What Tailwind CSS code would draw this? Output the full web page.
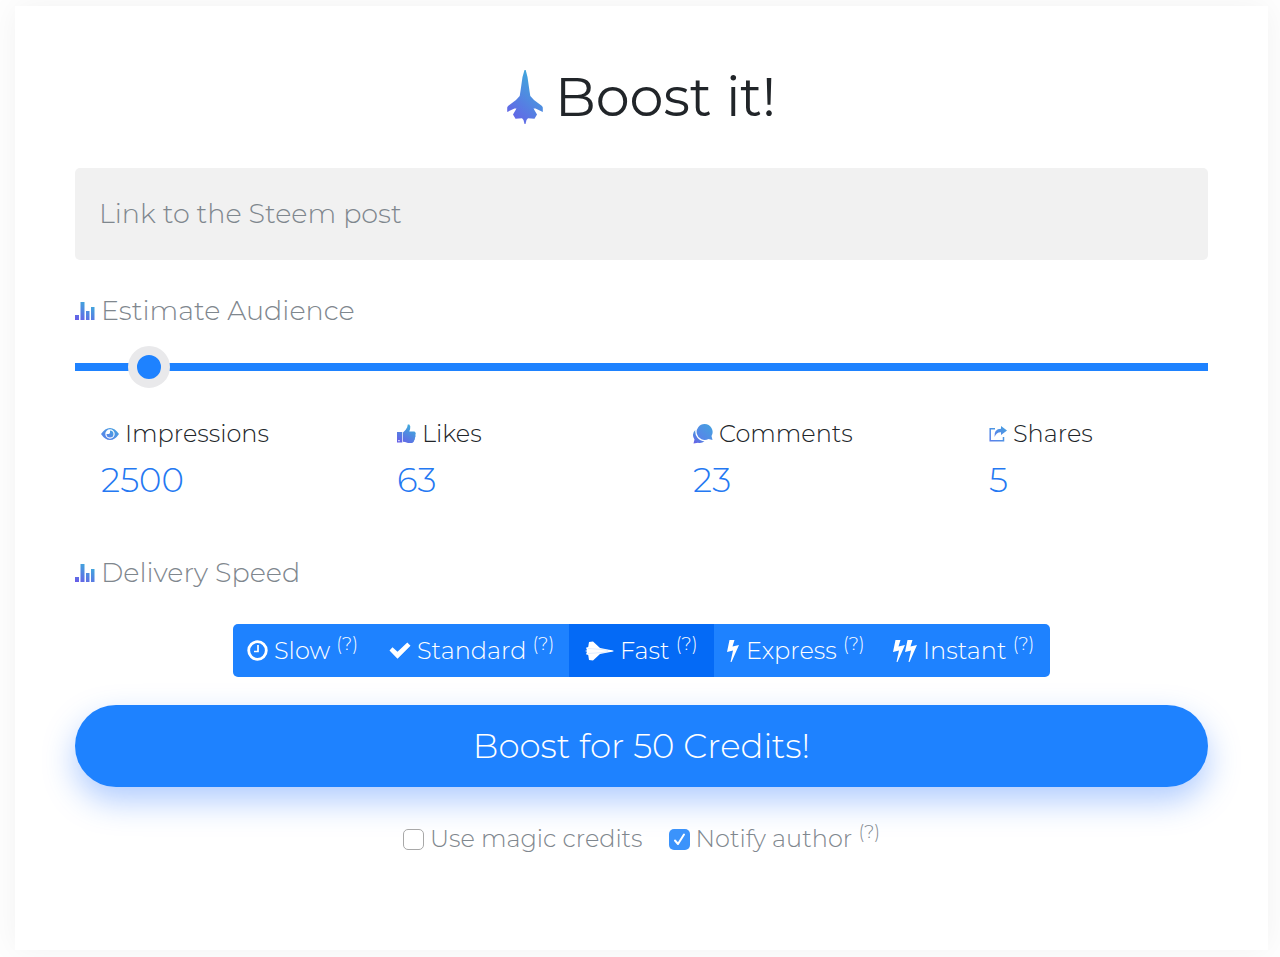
<!DOCTYPE html>
<html lang="en">
<head>
<meta charset="utf-8">
<meta name="viewport" content="width=device-width, initial-scale=1">
<title>Boost it!</title>
<script src="https://cdn.jsdelivr.net/npm/@tailwindcss/browser@4"></script>
</head>
<body class="min-h-screen bg-[#fefefe] pt-1.5 pr-3 pb-1.5 pl-[15px] font-['Montserrat','Inter',sans-serif] font-light text-[#212529]">
<svg class="absolute h-0 w-0" aria-hidden="true">
  <defs>
    <linearGradient id="g" x1="0" y1="1" x2="0.6" y2="0"><stop offset="0" stop-color="#6a5ae8"/><stop offset="1" stop-color="#3fa9dc"/></linearGradient>
    <linearGradient id="g2" x1="0" y1="1" x2="1" y2="0"><stop offset="0" stop-color="#5c7fea"/><stop offset="1" stop-color="#43a3df"/></linearGradient>
    <symbol id="bars" viewBox="0 0 20 18"><path fill="url(#g)" d="M0 13h4v5H0zM5.500 0h4v18h-4zM11 9h3.500v9H11zM16 5h3.500v13H16z"/></symbol>
  </defs>
</svg>
<main class="min-h-[944px] bg-white px-15 pt-[55px] pb-20 shadow-[0_0_30px_rgba(0,0,0,0.05)]">
  <form>
    <h1 class="flex h-[72px] items-center justify-center gap-3 text-[54px] leading-[72px] font-normal whitespace-nowrap">
      <svg class="h-[54px] w-9 shrink-0" viewBox="0 0 36 54" aria-hidden="true"><path fill="url(#g)" d="M17.500 0h1.200L20.500 7l2 14 .8 5 3.700 4 8 6 .8 1.500v4.500L28.500 38.500 26.500 38.500 30 44.500 27.500 48.800 21 48.200 19.500 50 18.500 54h-1L16.500 50 15 48.200 8.500 48.800 6 44.500 9.500 38.500 7.500 38.500.2 42V37.500L1 36 9 30l3.700-4 .8-5 2-14z"/></svg>
      <span>Boost it!</span>
    </h1>
    <input type="text" aria-label="Link to the Steem post" placeholder="Link to the Steem post" class="mt-[35px] block h-[92px] w-full rounded-[5px] bg-[#f1f1f1] px-6 pb-0.5 text-[27px] font-light text-gray-700 outline-none placeholder:text-[#7f878e]">

    <label for="audience" class="mt-[33px] flex h-9 items-center gap-1.5 text-[27px] leading-9 text-[#7f878e]">
      <svg class="h-[18px] w-5 shrink-0" aria-hidden="true"><use href="#bars"/></svg>Estimate Audience
    </label>
    <input id="audience" type="range" min="0" max="51500" step="100" value="2500" class="mt-[17px] block h-[42px] w-full cursor-pointer appearance-none bg-transparent outline-none [&::-webkit-slider-runnable-track]:h-2 [&::-webkit-slider-runnable-track]:bg-[#1e82ff] [&::-webkit-slider-thumb]:-mt-[17px] [&::-webkit-slider-thumb]:size-[42px] [&::-webkit-slider-thumb]:appearance-none [&::-webkit-slider-thumb]:rounded-full [&::-webkit-slider-thumb]:border-[9px] [&::-webkit-slider-thumb]:border-[#e9e9eb] [&::-webkit-slider-thumb]:bg-[#1e82ff]">

    <dl class="mt-7 grid grid-cols-4 gap-x-[77px] pl-[26px] whitespace-nowrap">
      <div>
        <dt class="flex h-9 items-center gap-1.5 text-2xl leading-9"><svg class="h-5 w-[18px] shrink-0" viewBox="0 0 18 20" aria-hidden="true"><path fill="url(#g2)" fill-rule="evenodd" d="M0 10Q4 4 9 4t9 6q-4 6-9 6T0 10zm4.300 0a4.700 4.700 0 0 0 9.400 0 4.700 4.700 0 0 0-9.400 0z"/><path fill="url(#g2)" fill-rule="evenodd" d="M9 6.500a3.500 3.500 0 1 1-3.500 3.500H7.800A1.300 1.300 0 0 0 9 8.800z"/></svg>Impressions</dt>
        <dd class="mt-[7px] text-[34px] leading-[42px] text-[#2478f2]">2500</dd>
      </div>
      <div>
        <dt class="flex h-9 items-center gap-1.5 text-2xl leading-9"><svg class="h-5 w-[19px] shrink-0" viewBox="0 0 19 20" aria-hidden="true"><path fill="url(#g)" fill-rule="evenodd" d="M0 8h5.300v10.500H0zm1.300 8v1.300h1.300V16zM6 8.500l2.700-2.800 1.500-2.500L10.800.5h1.500l1 2-.2 2.500-.8 2.500H17.500l1.300 1.500-.4 2 .2 1.200-.6 1.500-.2 1.800-.8 1.300-.2 1-1.600 1.200H11l-3-.9-2-.3z"/></svg>Likes</dt>
        <dd class="mt-[7px] text-[34px] leading-[42px] text-[#2478f2]">63</dd>
      </div>
      <div>
        <dt class="flex h-9 items-center gap-1.5 text-2xl leading-9"><svg class="h-5 w-5 shrink-0" viewBox="0 0 20 20" aria-hidden="true"><path fill="url(#g2)" d="M11.500 0A8 8 0 0 1 18.500 12l1 4-4-1A8 8 0 1 1 11.500 0z"/><path fill="url(#g)" d="M2.300 6A10 10 0 0 0 11.500 17.300 8 8 0 0 1 5 18.700L.5 19.500l1-4A7 7 0 0 1 2.300 6z"/></svg>Comments</dt>
        <dd class="mt-[7px] text-[34px] leading-[42px] text-[#2478f2]">23</dd>
      </div>
      <div>
        <dt class="flex h-9 items-center gap-1.5 text-2xl leading-9"><svg class="h-5 w-[18px] shrink-0" viewBox="0 0 18 20" aria-hidden="true"><path fill="none" stroke="url(#g2)" stroke-width="1.500" d="M6 4.800H1.200v12h13.300V13"/><path fill="url(#g2)" d="M12 2l6 4.500-6 4.500V8.300Q7.500 8 5.500 13q-.8-8 6.500-8.200z"/></svg>Shares</dt>
        <dd class="mt-[7px] text-[34px] leading-[42px] text-[#2478f2]">5</dd>
      </div>
    </dl>

    <h2 id="speed" class="mt-[54px] flex h-9 items-center gap-1.5 text-[27px] leading-9 font-light text-[#7f878e]">
      <svg class="h-[18px] w-5 shrink-0" aria-hidden="true"><use href="#bars"/></svg>Delivery Speed
    </h2>
    <div role="group" aria-labelledby="speed" class="mx-auto mt-[33px] flex h-[53px] w-fit overflow-hidden rounded-[5px] bg-[#1e82ff] text-2xl whitespace-nowrap text-white">
      <button type="button" aria-pressed="false" class="flex w-[142px] items-center gap-1.5 pl-3.5 font-light">
        <svg class="size-[21px] shrink-0" viewBox="0 0 21 21" fill="none" stroke="currentColor" aria-hidden="true"><circle cx="10.500" cy="10.500" r="8.800" stroke-width="2.800"/><path stroke-width="1.700" d="M11 5v6.500H7"/></svg>
        <span>Slow <sup class="text-lg leading-none">(?)</sup></span>
      </button>
      <button type="button" aria-pressed="false" class="flex w-[194px] items-center gap-1.5 pl-3.5 font-light">
        <svg class="h-[17px] w-[22px] shrink-0" viewBox="0 0 22 17" aria-hidden="true"><path fill="currentColor" d="M.5 8.500L3.500 5.300l5 4.500L18.300.5l3.200 3.200L8.500 16.800z"/></svg>
        <span>Standard <sup class="text-lg leading-none">(?)</sup></span>
      </button>
      <button type="button" aria-pressed="true" class="flex w-[145px] items-center gap-1.5 bg-[#046af6] pl-4 font-light">
        <svg class="h-5 w-[29px] shrink-0" viewBox="0 0 29 20" aria-hidden="true"><path fill="currentColor" d="M4 1l4-.5 7 6.500 9 1.700q4 .5 5 1.300-1 .8-5 1.300l-9 1.700L8 19.500 4 19l-.8-5L1 13.300 2 10.800 0 10l2-.8L1 6.700 3.200 6z"/><path fill="none" stroke="#c3dafc" stroke-width=".5" d="M3 7.500l12 .8 8 1M3 12.500l12-.8 8-1"/></svg>
        <span>Fast <sup class="text-lg leading-none">(?)</sup></span>
      </button>
      <button type="button" aria-pressed="false" class="flex w-[164px] items-center gap-1.5 pl-3 font-light">
        <svg class="h-[22px] w-3.5 shrink-0" viewBox="0 0 14 22" aria-hidden="true"><path fill="currentColor" d="M3.500 0H8.500L6.500 6.500 13 5 5.500 22H4.500L7 10.500 1 12z"/></svg>
        <span>Express <sup class="text-lg leading-none">(?)</sup></span>
      </button>
      <button type="button" aria-pressed="false" class="flex w-[172px] items-center gap-1.5 pl-3.5 font-light">
        <svg class="h-[22px] w-[25px] shrink-0" viewBox="0 0 25 22" aria-hidden="true"><path fill="currentColor" d="M3.500 0H8.500L6.500 6.500 13 5 5.500 22H4.500L7 10.500 1 12zM15.500 0h5l-2 6.500L25 5l-7.500 17h-1L19 10.500 13 12z"/></svg>
        <span>Instant <sup class="text-lg leading-none">(?)</sup></span>
      </button>
    </div>

    <button type="submit" class="mt-7 block h-[82px] w-full rounded-full bg-[#1e82ff] text-[34px] font-light text-white shadow-[0_14px_32px_rgba(30,110,255,0.35)]">Boost for 50 Credits!</button>

    <div class="mt-[34px] flex h-9 items-center justify-center gap-[26px] text-2xl leading-9 whitespace-nowrap text-[#7f878e]">
      <label class="flex items-center gap-1.5"><input type="checkbox" class="size-[21px] appearance-none rounded-[5px] border border-[#a8a8a8] bg-white">Use magic credits</label>
      <label class="flex items-center gap-1.5">
        <span class="grid size-[21px] place-items-center">
          <input type="checkbox" checked class="col-start-1 row-start-1 size-[21px] appearance-none rounded-[5px] bg-[#3b93fb]">
          <svg class="pointer-events-none col-start-1 row-start-1 size-[15px]" viewBox="0 0 15 15" aria-hidden="true"><path fill="none" stroke="#fff" stroke-width="2" stroke-linecap="round" stroke-linejoin="round" d="M3 8.500L6 12l6-9.500"/></svg>
        </span>
        <span>Notify author <sup class="text-lg leading-none">(?)</sup></span>
      </label>
    </div>
  </form>
</main>
</body>
</html>
